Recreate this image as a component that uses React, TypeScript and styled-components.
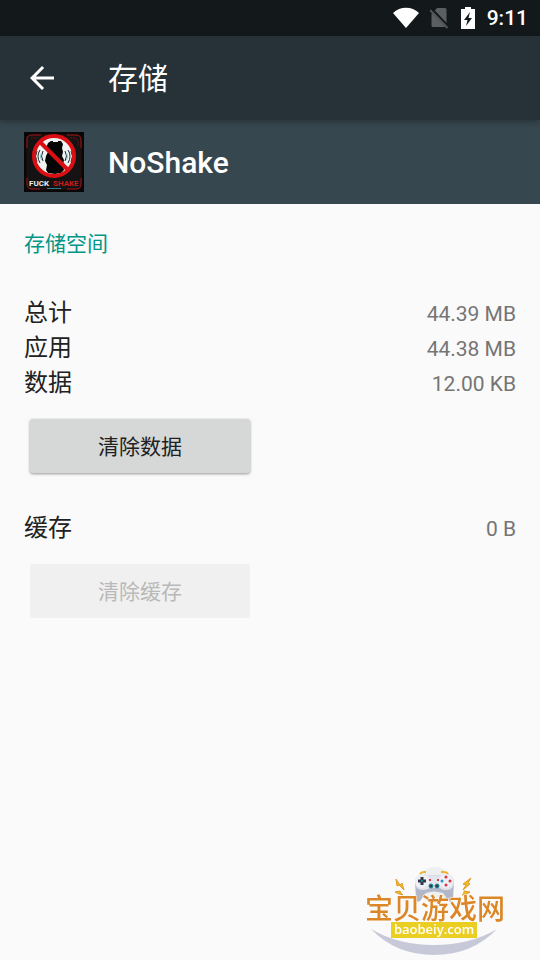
import React from "react";
import styled, { createGlobalStyle } from "styled-components";

const GlobalStyle = createGlobalStyle`
  * { box-sizing: border-box; }
  body {
    margin: 0;
    background: #fafafa;
    color: #212121;
    font-family: Roboto, "Noto Sans CJK SC", sans-serif;
  }
`;

const Screen = styled.div`
  min-height: 100vh;
  display: flex;
  flex-direction: column;
`;

const StatusBar = styled.div`
  height: 36px;
  padding: 0 12px;
  display: flex;
  align-items: center;
  justify-content: flex-end;
  background: #13181b;
  color: #fff;
`;

const StatusIcons = styled.div`
  display: flex;
  align-items: center;
  gap: 11px;
  margin-right: 12px;
`;

const Clock = styled.time`
  font-size: 21px;
  font-weight: 500;
  line-height: 36px;
`;

const AppBar = styled.header`
  position: relative;
  height: 84px;
  padding: 0 24px;
  display: flex;
  align-items: center;
  gap: 48px;
  background: #263238;
  color: #fff;
  box-shadow: 0 2px 6px rgba(0, 0, 0, 0.3);
`;

const BackButton = styled.button`
  display: flex;
  padding: 0;
  border: 0;
  background: none;
  color: inherit;
  cursor: pointer;
`;

const Title = styled.h1`
  margin: 0;
  padding-top: 2px;
  font-size: 30px;
  font-weight: 400;
  line-height: 36px;
`;

const AppHeader = styled.section`
  height: 84px;
  padding: 0 24px;
  display: flex;
  align-items: center;
  gap: 24px;
  background: #37474f;
  color: #fff;
`;

const AppName = styled.h2`
  margin: 0;
  padding-top: 2px;
  font-size: 30px;
  font-weight: 500;
  line-height: 36px;
`;

const Content = styled.main`
  padding: 24px;
`;

const SectionTitle = styled.h3`
  margin: 0 0 36px;
  color: #009688;
  font-size: 21px;
  font-weight: 400;
  line-height: 32px;
`;

const Stats = styled.dl`
  margin: 0;
`;

const StatRow = styled.div`
  display: flex;
  align-items: baseline;
  justify-content: space-between;
  height: 35px;
  line-height: 35px;
`;

const StatLabel = styled.dt`
  font-size: 24px;
`;

const StatValue = styled.dd`
  margin: 0;
  color: #757575;
  font-size: 21px;
`;

const ActionButton = styled.button`
  display: block;
  width: 220px;
  height: 54px;
  margin: 18px 6px 38px;
  padding: 0 0 2px;
  border: 0;
  border-radius: 3px;
  background: #d6d8d7;
  color: #212121;
  font: inherit;
  font-size: 21px;
  box-shadow: 0 1px 3px rgba(0, 0, 0, 0.4);
  cursor: pointer;

  &:disabled {
    background: #f0f0f0;
    color: #b9b9b9;
    box-shadow: none;
    cursor: default;
  }
`;

const Watermark = styled.a`
  position: fixed;
  right: 30px;
  bottom: 0;
  line-height: 0;
`;

const WifiIcon = () => (
  <svg width="26" height="22" viewBox="0 0 26 22" aria-label="Wi-Fi">
    <path d="M13 21 0 6C7-1 19-1 26 6Z" fill="#fff" />
  </svg>
);

const NoSimIcon = () => (
  <svg width="20" height="22" viewBox="0 0 20 22" aria-label="No SIM">
    <path d="M7 1h8q1.500 0 1.500 1.500V20H3q-1.500 0-1.500-1.500V7Z" fill="#5c5f61" />
    <path d="M1 1 19 20" stroke="#13181b" strokeWidth="2" />
    <path d="M0 3 17.500 21" stroke="#505456" strokeWidth="2" />
  </svg>
);

const BatteryIcon = () => (
  <svg width="14" height="22" viewBox="0 0 14 22" aria-label="Charging">
    <path d="M4 0h6v2h4v20H0V2h4Z" fill="#fff" />
    <path d="M9 5 3 13h3.500L5 19l6-8H7.500Z" fill="#13181b" />
  </svg>
);

const BackIcon = () => (
  <svg width="36" height="36" viewBox="0 0 24 24" fill="currentColor" aria-hidden="true">
    <path d="M20 11H7.830l5.590-5.590L12 4l-8 8 8 8 1.410-1.410L7.830 13H20z" />
  </svg>
);

const NoShakeIcon = () => (
  <svg width="60" height="60" viewBox="0 0 60 60" aria-hidden="true">
    <rect width="60" height="60" fill="#080606" />
    <rect x="3" y="3" width="54" height="54" rx="5" fill="#141213" stroke="#2a0c0d" />
    <path
      d="M3 16V7q0-4 5-4h9M43 3h9q5 0 5 5v8M3 46v6q0 5 5 5h8M43 57h9q5 0 5-5v-6"
      fill="none"
      stroke="#9c1719"
    />
    <path d="M7 6h7M46 6h6l2 3v5" fill="none" stroke="#6a1113" strokeDasharray="2 1" />
    <circle cx="30" cy="24" r="19" fill="#f1f3f2" />
    <path
      d="M24 11 27 9h2v1h5V9h3l2 3-1 4 1 4-1 4 2 4-1 5 1 5-3 3-6 1-7-1-2-3 1-5-2-4 1-5 2-4-2-4Z"
      fill="#050505"
    />
    <path
      d="M19 19q-3 5 0 10M16 18q-4 6 0 13M13 19q-3 5 0 11M41 19q3 5 0 10M44 18q4 6 0 13M47 19q3 5 0 11"
      fill="none"
      stroke="#172a30"
    />
    <path d="M17.500 21q-2 4 0 7M42.500 21q2 4 0 7" fill="none" stroke="#7bc2cd" />
    <circle cx="30" cy="24" r="20" fill="none" stroke="#d90f13" strokeWidth="4" />
    <path d="m16 10 28 28" stroke="#d90f13" strokeWidth="4" />
    <g fontFamily="Roboto, sans-serif" fontSize="8" fontWeight="700">
      <text x="5" y="54" fill="#ececec">FUCK</text>
      <text x="29" y="54" fill="#c81b1e">SHAKE</text>
    </g>
    <path d="M23 56.500h14" stroke="#2a7f8b" />
  </svg>
);

const SiteLogo = () => (
  <svg width="148" height="96" viewBox="0 0 148 96" role="img" aria-label="宝贝游戏网 baobeiy.com">
    <circle cx="73" cy="21" r="18" fill="#eeefef" />
    <path d="M9 65Q36 81 72 81T135 65Q110 91 72 91T9 65Z" fill="#c7c9d8" />
    <path
      d="M60 10q12 3 25 0 6 1 7 8l-1 17q-1 4-4 2l-6-8q-9-3-17 0l-6 8q-3 2-4-2l-1-17q1-7 7-8Z"
      fill="#b3b8c8"
    />
    <path
      d="M60 10q12 3 25 0 6 0 7 8 0 7-7 8-5 0-7-2H68q-3 2-8 2-7-1-7-8 1-8 7-8Z"
      fill="#e2e5ed"
    />
    <circle cx="60" cy="17" r="7" fill="#eef0f5" />
    <circle cx="84" cy="17" r="7" fill="#eef0f5" />
    <path d="M58 10q1-2 4-2h2M79 8h3q3 0 4 2" fill="none" stroke="#f0b12c" strokeWidth="2" />
    <path d="M60 13v8M56 17h8" stroke="#303847" strokeWidth="3" />
    <circle cx="60" cy="17" r="1" fill="#1aa1a8" />
    <g fill="#da3446">
      <circle cx="84" cy="13" r="1.500" />
      <circle cx="84" cy="21" r="1.500" />
      <path d="M67 15h2v2h-2ZM75 15h2v2h-2Z" />
    </g>
    <circle cx="80" cy="17" r="1.500" fill="#2693c5" />
    <circle cx="88" cy="17" r="1.500" fill="#da3446" />
    <g fill="#303c4d" stroke="#178c95">
      <circle cx="69" cy="22" r="2" />
      <circle cx="75" cy="22" r="2" />
    </g>
    <path
      d="m34 15 4 6 2-2 2 7-5-5-2 1ZM109 14l-8 6 3 1-3 5 7-6-2-1ZM33 28l5-1 1 2 2 2-4-1ZM108 28l-6-1v2l-2 2 5-1Z"
      fill="#efbc25"
      stroke="#e09a28"
      strokeWidth="1"
    />
    <text
      x="3"
      y="55"
      fill="#db8727"
      stroke="#fff"
      strokeWidth="1"
      paintOrder="stroke"
      fontFamily='"Noto Sans CJK SC", sans-serif'
      fontSize="28"
      fontWeight="500"
    >
      宝贝游戏网
    </text>
    <rect x="29" y="58" width="86" height="16" fill="#ebce22" />
    <text
      x="72"
      y="70"
      fill="#fff"
      textAnchor="middle"
      fontFamily='"Open Sans", sans-serif'
      fontSize="13"
      fontWeight="600"
    >
      baobeiy.com
    </text>
  </svg>
);

type Stat = { label: string; value: string };

const storage: Stat[] = [
  { label: "总计", value: "44.39 MB" },
  { label: "应用", value: "44.38 MB" },
  { label: "数据", value: "12.00 KB" },
];

const cache: Stat[] = [{ label: "缓存", value: "0 B" }];

const StatList = ({ items }: { items: Stat[] }) => (
  <Stats>
    {items.map(({ label, value }) => (
      <StatRow key={label}>
        <StatLabel>{label}</StatLabel>
        <StatValue>{value}</StatValue>
      </StatRow>
    ))}
  </Stats>
);

export default function App() {
  return (
    <Screen lang="zh-CN">
      <GlobalStyle />
      <StatusBar>
        <StatusIcons>
          <WifiIcon />
          <NoSimIcon />
          <BatteryIcon />
        </StatusIcons>
        <Clock>9:11</Clock>
      </StatusBar>
      <AppBar>
        <BackButton type="button" aria-label="返回">
          <BackIcon />
        </BackButton>
        <Title>存储</Title>
      </AppBar>
      <AppHeader>
        <NoShakeIcon />
        <AppName>NoShake</AppName>
      </AppHeader>
      <Content>
        <SectionTitle>存储空间</SectionTitle>
        <StatList items={storage} />
        <ActionButton type="button">清除数据</ActionButton>
        <StatList items={cache} />
        <ActionButton type="button" disabled>
          清除缓存
        </ActionButton>
      </Content>
      <Watermark href="#">
        <SiteLogo />
      </Watermark>
    </Screen>
  );
}
